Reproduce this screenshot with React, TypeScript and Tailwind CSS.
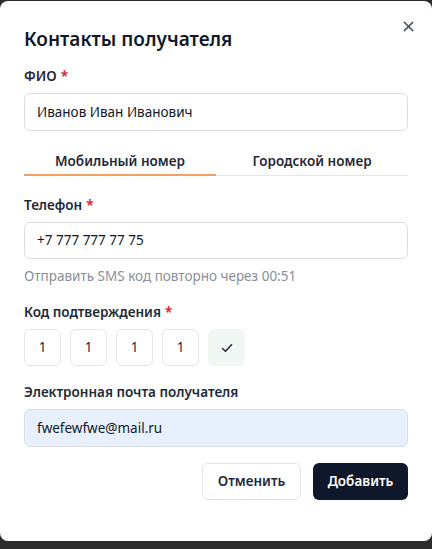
import React from 'react';

function Label({ children, required }: { children: React.ReactNode; required?: boolean }) {
  return (
    <div className="text-[13.5px] font-semibold text-[#1f2937] leading-5 mb-[7px]">
      {children}
      {required && <span className="text-[#c22] ml-1">*</span>}
    </div>
  );
}

export default function App() {
  const code = ['1', '1', '1', '1'];
  return (
    <div className="w-[432px] h-[549px] bg-[#2b2b2b] pt-[1px]" style={{ fontFamily: '"Noto Sans", "Open Sans", sans-serif' }}>
      <div className="relative bg-white rounded-[8px] h-[540px] px-6 pt-[24px]">
        <button className="absolute right-[14px] top-[15px] w-5 h-5 flex items-center justify-center text-[#4b5563]">
          <svg width="11" height="11" viewBox="0 0 12 12" fill="none" stroke="currentColor" strokeWidth="1.7" strokeLinecap="round">
            <path d="M1.5 1.5l9 9M10.5 1.5l-9 9" />
          </svg>
        </button>
        <h2 className="text-[19px] font-semibold text-[#111827] leading-7">Контакты получателя</h2>

        <div className="mt-[13px]">
          <Label required>ФИО</Label>
          <div className="h-[38px] border border-[#d9dde3] rounded-[6px] flex items-center px-3 text-[13.5px] text-[#111827]">
            Иванов Иван Иванович
          </div>
        </div>

        <div className="mt-[20px] flex border-b border-[#e5e7eb]">
          <div className="flex-1 text-center text-[13.5px] font-semibold leading-5 text-[#1f2937] pb-[3px] border-b-2 border-[#f0a060] -mb-[1px]">
            Мобильный номер
          </div>
          <div className="flex-1 text-center text-[13.5px] font-semibold leading-5 text-[#1f2937] pb-[3px]">
            Городской номер
          </div>
        </div>

        <div className="mt-[19px]">
          <Label required>Телефон</Label>
          <div className="h-[37px] border border-[#d9dde3] rounded-[6px] flex items-center px-3 text-[13.5px] text-[#111827]">
            +7 777 777 77 75
          </div>
          <div className="mt-[7px] text-[13.5px] text-[#8a8f98] leading-5">Отправить SMS код повторно через 00:51</div>
        </div>

        <div className="mt-[16px]">
          <Label required>Код подтверждения</Label>
          <div className="flex gap-[9px]">
            {code.map((c, i) => (
              <div key={i} className="w-[37px] h-[37px] border border-[#e1e5ea] rounded-[6px] flex items-center justify-center text-[13.5px] text-[#1f2937]">
                {c}
              </div>
            ))}
            <div className="w-[37px] h-[37px] rounded-[6px] bg-[#f1f8f4] flex items-center justify-center text-[#1f2937]">
              <svg width="12" height="10" viewBox="0 0 12 10" fill="none" stroke="currentColor" strokeWidth="1.5" strokeLinecap="round" strokeLinejoin="round">
                <path d="M1.5 5.5l3 2.8L10.5 1.8" />
              </svg>
            </div>
          </div>
        </div>

        <div className="mt-[16px]">
          <Label>Электронная почта получателя</Label>
          <div className="h-[38px] border border-[#d9dde3] bg-[#e8f0fe] rounded-[6px] flex items-center px-3 text-[13.5px] text-[#111827]">
            fwefewfwe@mail.ru
          </div>
        </div>

        <div className="mt-[16px] flex justify-end gap-3">
          <button className="h-[37px] w-[99px] border border-[#e1e5ea] rounded-[6px] bg-white text-[13.5px] font-semibold text-[#1f2937]">
            Отменить
          </button>
          <button className="h-[37px] w-[95px] rounded-[6px] bg-[#0f172a] text-[13.5px] font-semibold text-white">
            Добавить
          </button>
        </div>
      </div>
    </div>
  );
}
